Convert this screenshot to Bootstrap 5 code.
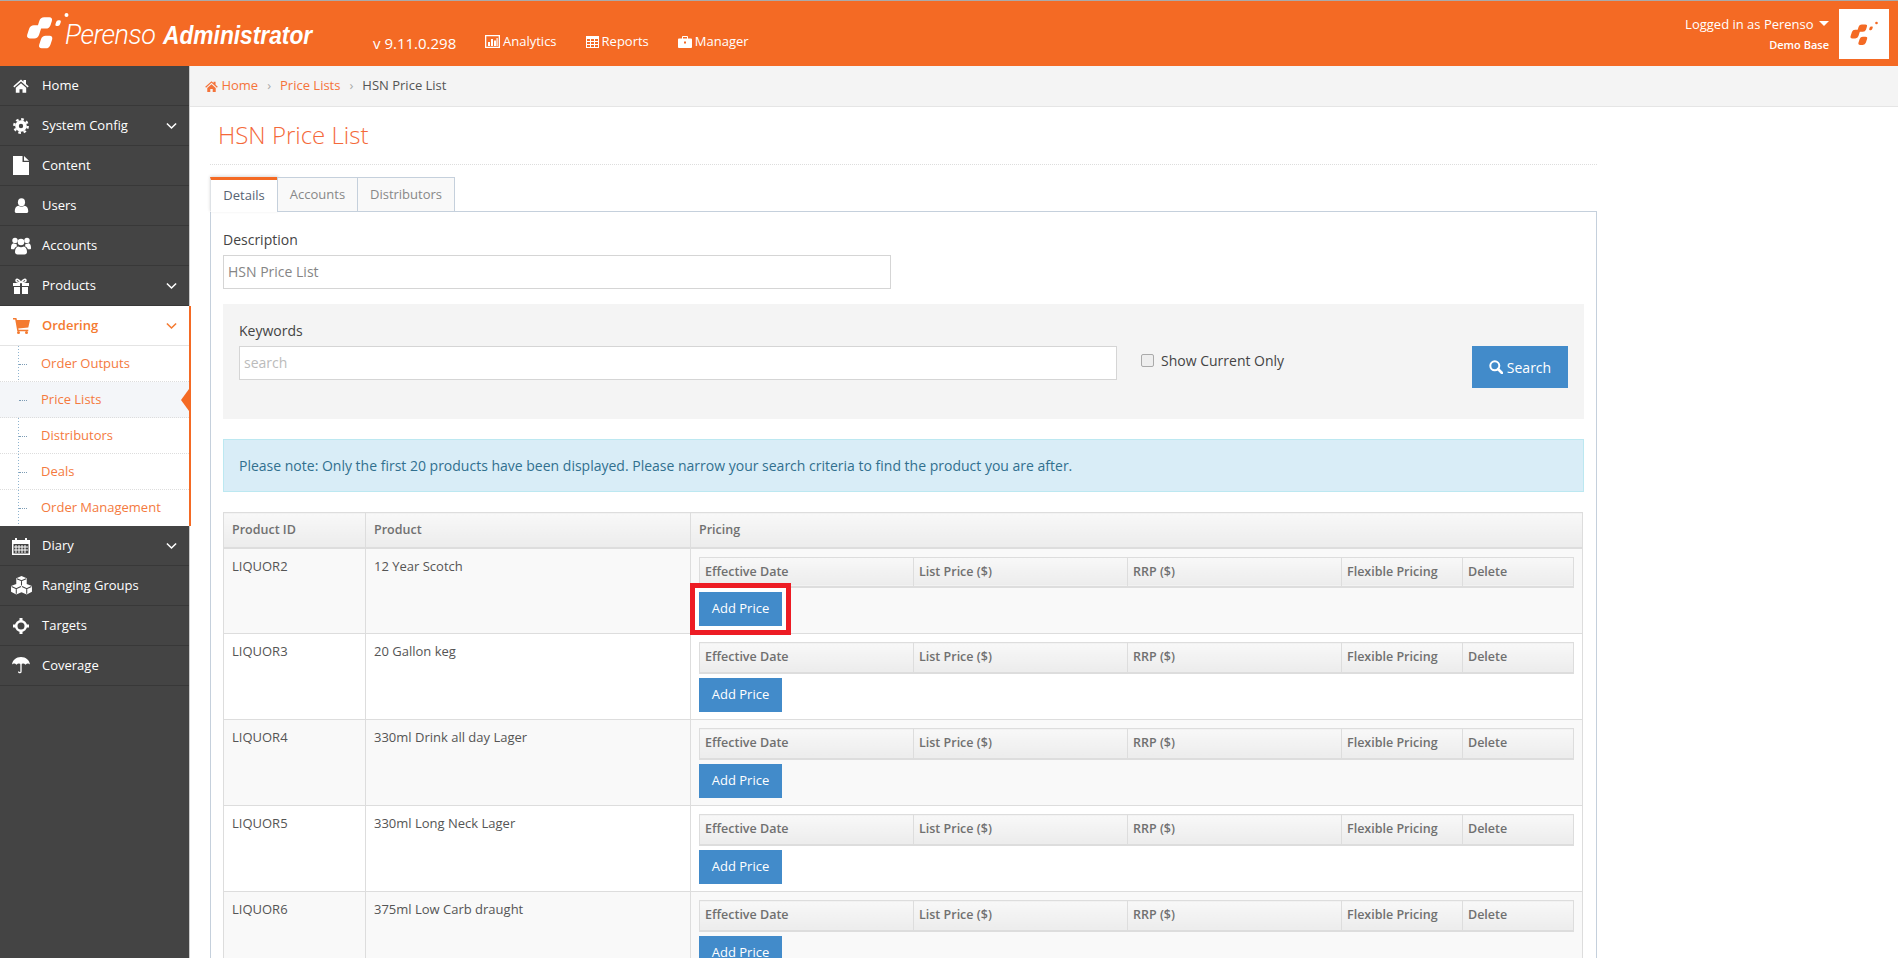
<!DOCTYPE html>
<html lang="en">
  <head>
    <meta charset="UTF-8" />
    <meta name="viewport" content="width=device-width, initial-scale=1.0" />
    <title>HSN Price List</title>
    <link href="https://cdn.jsdelivr.net/npm/bootstrap@5.3.0/dist/css/bootstrap.min.css" rel="stylesheet" />
    <style>
      html, body { height: 100%; overflow: hidden; }
      body { font-family: "Open Sans", "Liberation Sans", sans-serif; font-size: 13px; color: #555; background: #fff; }
      .ico { fill: currentColor; flex: none; }

      .top-bar { height: 66px; background: #f46a24; border-top: 1px solid #aaa; color: #fff; padding-right: 9px; }
      .logo-wrap { width: 360px; padding-left: 25px; }
      .logo-mark { margin-top: -5px; }
      .logo-thin { font-family: Roboto, sans-serif; font-weight: 300; font-style: italic; font-size: 27px; margin-left: -5px; letter-spacing: -.5px; padding-top: 4px; }
      .logo-bold { font-family: "Liberation Sans", sans-serif; font-weight: 700; font-style: italic; font-size: 25px; margin-left: 8px; padding-top: 4px; display: inline-block; transform: scaleX(.91); transform-origin: left center; }
      .version { font-size: 15px; width: 112px; margin-left: 13px; padding-top: 31px; }
      .top-link { font-size: 13px; color: #fff; text-decoration: none; padding-top: 31px; gap: 3px; }
      .top-link + .top-link { margin-left: 29px; }
      .who { text-align: right; margin-right: 10px; line-height: 1; }
      .who-name { font-size: 13px; }
      .who-caret { display: inline-block; border-left: 5px solid transparent; border-right: 5px solid transparent; border-top: 5px solid #fff; margin-left: 2px; vertical-align: 3px; }
      .who-base { font-size: 11px; margin-top: 8px; font-weight: 600; }
      .who-pic { width: 50px; height: 50px; background: #fff; color: #f46a24; }

      .side-bar { width: 190px; flex: none; background: #444; border-right: 1px solid #ccc; }
      .side-bar .nav-link { height: 40px; padding: 0 12px 0 0; color: #fff; font-size: 13px; border-bottom: 1px solid #383838; }
      .side-ico { width: 42px; flex: none; }
      .side-bar .side-open { background: #fff; color: #f47a30; font-weight: 600; border-bottom: 1px solid #e4e4e4; }
      .open-group { background: #fff; width: 191px; border-right: 2px solid #f46a24; }
      .sub-list { background-image: linear-gradient(#8fb4d0 50%, transparent 50%); background-size: 1px 3px; background-position: 18px 0; background-repeat: repeat-y; }
      .sub-link { display: flex; align-items: center; height: 36px; padding-left: 41px; color: #f47a40; text-decoration: none; font-size: 13px; border-bottom: 1px dotted #ddd; position: relative; }
      .sub-link:last-child { border-bottom: 0; }
      .sub-link::before { content: ""; position: absolute; left: 19px; top: 50%; width: 8px; border-top: 1px dotted #7c9cb5; }
      .sub-now { background: #f4f6f9; }
      .sub-now::after { content: ""; position: absolute; right: 0; top: 7px; border-top: 11px solid transparent; border-bottom: 11px solid transparent; border-right: 8px solid #f46a24; }

      .crumbs { height: 41px; background: #f4f4f4; border-bottom: 1px solid #e5e5e5; padding-left: 15px; --bs-breadcrumb-divider: "\203A"; }
      .crumbs .breadcrumb { --bs-breadcrumb-margin-bottom: 0; --bs-breadcrumb-item-padding-x: 9px; --bs-breadcrumb-divider-color: #aaa; font-size: 13px; }
      .crumbs a { color: #f4733a; text-decoration: none; }
      .crumbs .breadcrumb-item.active { color: #555; }
      .page-wrap { width: 1387px; margin-left: 20px; }
      .page-head { height: 58px; border-bottom: 1px dotted #ddd; padding: 13px 0 0 8px; margin-bottom: 12px; }
      .page-head h1 { font-size: 24px; font-weight: 300; color: #f4693a; margin: 0; line-height: 30px; }

      .tab-row { --bs-nav-tabs-border-color: #c5d0dc; --bs-nav-tabs-border-radius: 0; --bs-nav-tabs-border-width: 1px; border-bottom-color: #c5d0dc; height: 35px; }
      .tab-row .nav-link { height: 35px; padding: 0; width: 98px; line-height: 33px; text-align: center; color: #888; background: #f9f9f9; border-color: #c5d0dc; font-size: 13px; margin-left: -1px; }
      .tab-row .nav-item:first-child .nav-link { margin-left: 0; }
      .tab-row .tab-a { width: 81px; }
      .tab-row .nav-link.active { width: 68px; background: #fff; color: #576373; border-top: 3px solid #f46a24; border-bottom-color: #fff; line-height: 31px; box-shadow: 0 -1px 3px rgba(0,0,0,.15); }
      .tab-body { border: 1px solid #c5d0dc; border-top: 0; padding: 18px 12px 0; height: 800px; }

      .field-lbl { font-size: 14px; line-height: 19px; margin-bottom: 6px; color: #444; display: block; }
      .plain-input { border-radius: 0; border: 1px solid #d5d5d5; font-size: 14px; height: 34px; padding: 3px 4px 5px; color: #858585; }
      .plain-input::placeholder { color: #bbb; }
      .desc-input { width: 668px; height: 34px; }
      .filter-box { background: #f4f4f4; height: 115px; margin-top: 15px; padding: 17px 16px 0; }
      .kw-col { width: 878px; }
      .chk-col { margin-left: 24px; padding-top: 30px; font-size: 14px; color: #444; line-height: 19px; }
      .chk-col .form-check-input { width: 13px; height: 13px; margin: 0 7px 0 0; border-color: #aaa; border-radius: 2px; background-color: #eee; }
      .blue-btn { background: #428bca; border: 0; border-radius: 0; color: #fff; font-size: 13px; }
      .find-btn { width: 96px; height: 42px; margin-top: 25px; margin-left: auto; font-size: 14px; }
      .note-box { margin: 20px 0; padding: 0 0 0 15px; height: 53px; background: #d9edf7; border: 1px solid #bce8f1; border-radius: 0; color: #31708f; line-height: 51px; font-size: 14px; }

      .price-tbl { table-layout: fixed; width: 1360px; border-collapse: collapse; margin: 0; }
      .price-tbl > * > tr > th, .price-tbl > * > tr > td { border: 1px solid #ddd; padding: 8px 8px 7px; font-size: 13px; vertical-align: top; line-height: 18px; }
      .price-tbl > thead > tr > th { height: 35px; font-size: 12.5px; font-weight: 600; color: #707070; padding: 7px 8px; line-height: 19px; background: linear-gradient(#f8f8f8, #ececec); border-bottom-width: 2px; }
      .price-tbl > tbody > tr > td { height: 86px; color: #555; background: #fff; }
      .price-tbl > tbody > tr:nth-child(odd) > td { background: #f9f9f9; }
      .c-id { width: 142px; }
      .c-name { width: 325px; }
      .sub-tbl { table-layout: fixed; width: 875px; border-collapse: collapse; margin-bottom: 4px; }
      .sub-tbl th { height: 30px; font-size: 12.5px; font-weight: 600; color: #707070; padding: 0 5px; line-height: 28px; border: 1px solid #ddd; border-bottom-width: 2px; background: linear-gradient(#f8f8f8, #ececec); }
      .s-a { width: 214px; }
      .s-b { width: 121px; }
      .add-btn { display: block; width: 83px; height: 34px; padding: 0; font-size: 13px; }
      .marked { box-shadow: 0 0 0 4px #fff, 0 0 0 9px #ed1c24; position: relative; z-index: 2; }
    </style>
  </head>
  <body class="d-flex flex-column">
    <svg width="0" height="0" class="position-absolute">
      <symbol id="i-mark" viewBox="30 20 135 115">
        <g transform="skewX(-18)">
          <rect x="88" y="36" width="38" height="34" rx="11" />
          <rect x="65" y="60" width="36" height="40" rx="11" />
          <rect x="111" y="92" width="34" height="38" rx="11" />
          <rect x="140" y="45" width="14" height="17" rx="5" />
        </g>
        <circle cx="155" cy="29" r="6" />
      </symbol>
      <symbol id="i-home" viewBox="0 0 16 16"><path d="M8 1.500 10.500 3.700V2H13v3.900l2.700 2.400-1 1.100L8 3.500 1.300 9.400l-1-1.100zM2.800 9.800 8 5.200l5.200 4.600v5H9.500v-3.600h-3v3.600H2.800z" /></symbol>
      <symbol id="i-gear" viewBox="0 0 16 16"><circle cx="8" cy="8" r="4" fill="none" stroke="currentColor" stroke-width="3.600" /><circle cx="8" cy="8" r="6.700" fill="none" stroke="currentColor" stroke-width="2.400" stroke-dasharray="2.600 2.660" /></symbol>
      <symbol id="i-file" viewBox="0 0 16 19"><path d="M0 0h9.500v6H16v13H0zM11 0l5 4.700h-5z" /></symbol>
      <symbol id="i-user" viewBox="0 0 16 16"><ellipse cx="8" cy="4.500" rx="3.800" ry="4.200" /><path d="M.8 14c0-3.400 1.700-5.300 4-5.700 2 1.300 4.400 1.300 6.400 0 2.300.4 4 2.300 4 5.700 0 1.200-.8 2-2 2H2.800c-1.200 0-2-.8-2-2z" /></symbol>
      <symbol id="i-group" viewBox="0 0 20 18"><circle cx="4" cy="3.500" r="2.700" /><circle cx="16" cy="3.500" r="2.700" /><circle cx="10" cy="5" r="3.300" /><path d="M0 10.500c0-2.500 1-3.900 2.500-4.200 1 .8 2.200.8 3.200.5-.2 1-.1 1.800.5 2.500-1.600.5-2.600 1.500-3 3H1c-.6 0-1-.4-1-1zM20 10.500c0-2.500-1-3.900-2.500-4.200-1 .8-2.200.8-3.200.5.200 1 .1 1.800-.5 2.500 1.600.5 2.600 1.500 3 3H19c.6 0 1-.4 1-1zM4 15c0-3 1.500-5 3.200-5.400 1.800 1 3.800 1 5.600 0C14.500 10 16 12 16 15c0 1.500-1 2.500-2.500 2.500h-7C5 17.500 4 16.500 4 15z" /></symbol>
      <symbol id="i-gift" viewBox="0 0 16 16"><path d="M0 5h7v3H0zM9 5h7v3H9zM1 9h6v7H1zM9 9h6v7H9z" /><path d="M8 4.500C6 1 3 .5 3 2.500c0 1.600 2.500 2 5 2zm0 0c2-3.500 5-4 5-2 0 1.600-2.500 2-5 2z" fill="none" stroke="currentColor" stroke-width="1.500" /></symbol>
      <symbol id="i-cart" viewBox="0 0 17 16"><path d="M0 0h3.400l.5 2H17l-1.700 7.500-10 1 .3 1.300h9.700v1.500H4.300L2.200 1.500H0z" /><circle cx="5.500" cy="14.500" r="1.500" /><circle cx="13.500" cy="14.500" r="1.500" /></symbol>
      <symbol id="i-cal" viewBox="0 0 18 18"><path d="M0 3h3V1h2v2h8V1h2v2h3v15H0zM1.500 7v9.500h15V7z" fill-rule="evenodd" /><path d="M4 8v8M7 8v8M10 8v8M13 8v8M2 10h14M2 13h14" stroke="currentColor" stroke-width="1" /></symbol>
      <symbol id="i-cube" viewBox="0 0 22 18">
        <path d="M11 0l5 2v5.500l5 2V15l-5 2.500-5-2-5 2L1 15V9.500l5-2V2z" />
        <path d="M6.500 2.500 11 4.500l4.500-2M11 4.500V9M1.500 10 6 12l4.500-2M6 12v5M11.500 10 16 12l4.500-2M16 12v5" fill="none" stroke="#444" stroke-width="1" />
      </symbol>
      <symbol id="i-target" viewBox="0 0 16 16"><circle cx="8" cy="8" r="4.800" fill="none" stroke="currentColor" stroke-width="2.600" /><path d="M6.500 0h3v3.500h-3zM6.500 12.500h3V16h-3zM0 6.500h3.500v3H0zM12.500 6.500H16v3h-3.500z" /></symbol>
      <symbol id="i-umb" viewBox="0 0 18 17"><path d="M9 0c5 0 8.500 3.300 9 7.500-1.300-1.300-3-1.300-4.500.2C12.300 6.400 10.400 6 9 7.500 7.600 6 5.700 6.400 4.500 7.700 3 6.200 1.300 6.200 0 7.500.5 3.300 4 0 9 0z" /><path d="M9 7v7.500c0 1.600-2.400 1.600-2.400 0" fill="none" stroke="currentColor" stroke-width="1.300" /></symbol>
      <symbol id="i-chev" viewBox="0 0 12 8"><path d="M1 1.200 6 6.200l5-5" fill="none" stroke="currentColor" stroke-width="1.700" /></symbol>
      <symbol id="i-chart" viewBox="0 0 15 13"><path d="M0 0h15v13H0zM1.300 1.300v10.400h12.400V1.300z" fill-rule="evenodd" /><path d="M3 7h2v4H3zM6 4h2v7H6zM9 5.500h2V11H9zM11.500 3h1.200v8h-1.200z" /></symbol>
      <symbol id="i-grid" viewBox="0 0 13 12"><path d="M0 0h13v12H0zM1 3v2h3V3zm4 0v2h3V3zm4 0v2h3V3zM1 6v2h3V6zm4 0v2h3V6zm4 0v2h3V6zM1 9v2h3V9zm4 0v2h3V9zm4 0v2h3V9z" fill-rule="evenodd" /></symbol>
      <symbol id="i-case" viewBox="0 0 14 12"><path d="M0 3.500C0 3 .5 2.500 1 2.500h3V1c0-.5.500-1 1-1h4c.5 0 1 .5 1 1v1.500h3c.5 0 1 .5 1 1V11c0 .5-.5 1-1 1H1c-.5 0-1-.5-1-1zM5 1v1.500h4V1zM6 5.500v2h2v-2z" fill-rule="evenodd" /></symbol>
      <symbol id="i-find" viewBox="0 0 14 14"><circle cx="5.800" cy="5.800" r="4.500" fill="none" stroke="currentColor" stroke-width="2" /><path d="M9 9l4 4" stroke="currentColor" stroke-width="2.600" stroke-linecap="round" /></symbol>
    </svg>

    <header class="top-bar d-flex flex-shrink-0">
      <div class="logo-wrap d-flex align-items-center">
        <svg class="ico logo-mark" width="45" height="38"><use href="#i-mark" /></svg>
        <span class="logo-thin">Perenso</span><span class="logo-bold">Administrator</span>
      </div>
      <div class="version">v 9.11.0.298</div>
      <a href="#" class="top-link d-flex align-items-center align-self-start">
        <svg class="ico" width="15" height="13"><use href="#i-chart" /></svg>Analytics
      </a>
      <a href="#" class="top-link d-flex align-items-center align-self-start">
        <svg class="ico" width="13" height="12"><use href="#i-grid" /></svg>Reports
      </a>
      <a href="#" class="top-link d-flex align-items-center align-self-start">
        <svg class="ico" width="14" height="12"><use href="#i-case" /></svg>Manager
      </a>
      <div class="ms-auto d-flex align-items-center">
        <div class="who">
          <div class="who-name">Logged in as Perenso <span class="who-caret"></span></div>
          <div class="who-base">Demo Base</div>
        </div>
        <div class="who-pic d-flex align-items-center justify-content-center">
          <svg class="ico" width="30" height="25"><use href="#i-mark" /></svg>
        </div>
      </div>
    </header>

    <div class="d-flex flex-grow-1 overflow-hidden">
      <nav class="side-bar nav flex-column flex-nowrap">
        <a class="nav-link d-flex align-items-center" href="#"><span class="side-ico d-flex justify-content-center"><svg class="ico" width="16" height="16"><use href="#i-home" /></svg></span>Home</a>
        <a class="nav-link d-flex align-items-center" href="#"><span class="side-ico d-flex justify-content-center"><svg class="ico" width="16" height="16"><use href="#i-gear" /></svg></span>System Config<svg class="ico ms-auto" width="11" height="8"><use href="#i-chev" /></svg></a>
        <a class="nav-link d-flex align-items-center" href="#"><span class="side-ico d-flex justify-content-center"><svg class="ico" width="16" height="19"><use href="#i-file" /></svg></span>Content</a>
        <a class="nav-link d-flex align-items-center" href="#"><span class="side-ico d-flex justify-content-center"><svg class="ico" width="15" height="15"><use href="#i-user" /></svg></span>Users</a>
        <a class="nav-link d-flex align-items-center" href="#"><span class="side-ico d-flex justify-content-center"><svg class="ico" width="20" height="18"><use href="#i-group" /></svg></span>Accounts</a>
        <a class="nav-link d-flex align-items-center" href="#"><span class="side-ico d-flex justify-content-center"><svg class="ico" width="16" height="16"><use href="#i-gift" /></svg></span>Products<svg class="ico ms-auto" width="11" height="8"><use href="#i-chev" /></svg></a>
        <div class="open-group">
          <a class="nav-link side-open d-flex align-items-center" href="#"><span class="side-ico d-flex justify-content-center"><svg class="ico" width="17" height="16"><use href="#i-cart" /></svg></span>Ordering<svg class="ico ms-auto" width="11" height="8"><use href="#i-chev" /></svg></a>
          <div class="sub-list">
            <a class="sub-link" href="#">Order Outputs</a>
            <a class="sub-link sub-now" href="#">Price Lists</a>
            <a class="sub-link" href="#">Distributors</a>
            <a class="sub-link" href="#">Deals</a>
            <a class="sub-link" href="#">Order Management</a>
          </div>
        </div>
        <a class="nav-link d-flex align-items-center" href="#"><span class="side-ico d-flex justify-content-center"><svg class="ico" width="18" height="18"><use href="#i-cal" /></svg></span>Diary<svg class="ico ms-auto" width="11" height="8"><use href="#i-chev" /></svg></a>
        <a class="nav-link d-flex align-items-center" href="#"><span class="side-ico d-flex justify-content-center"><svg class="ico" width="23" height="19"><use href="#i-cube" /></svg></span>Ranging Groups</a>
        <a class="nav-link d-flex align-items-center" href="#"><span class="side-ico d-flex justify-content-center"><svg class="ico" width="16" height="16"><use href="#i-target" /></svg></span>Targets</a>
        <a class="nav-link d-flex align-items-center" href="#"><span class="side-ico d-flex justify-content-center"><svg class="ico" width="18" height="17"><use href="#i-umb" /></svg></span>Coverage</a>
      </nav>

      <main class="flex-grow-1 overflow-hidden">
        <div class="crumbs d-flex align-items-center">
          <ol class="breadcrumb">
            <li class="breadcrumb-item"><a href="#"><svg class="ico" width="13" height="13"><use href="#i-home" /></svg> Home</a></li>
            <li class="breadcrumb-item"><a href="#">Price Lists</a></li>
            <li class="breadcrumb-item active">HSN Price List</li>
          </ol>
        </div>
        <div class="page-wrap">
          <div class="page-head"><h1>HSN Price List</h1></div>
          <ul class="nav nav-tabs tab-row">
            <li class="nav-item"><a class="nav-link active" href="#">Details</a></li>
            <li class="nav-item"><a class="nav-link tab-a" href="#">Accounts</a></li>
            <li class="nav-item"><a class="nav-link" href="#">Distributors</a></li>
          </ul>
          <div class="tab-body">
            <label class="field-lbl">Description</label>
            <input class="form-control plain-input desc-input" value="HSN Price List" />
            <div class="filter-box d-flex">
              <div class="kw-col">
                <label class="field-lbl">Keywords</label>
                <input class="form-control plain-input" placeholder="search" />
              </div>
              <div class="chk-col d-flex align-items-center align-self-start">
                <input class="form-check-input" type="checkbox" />Show Current Only
              </div>
              <button class="btn blue-btn find-btn d-flex align-items-center justify-content-center gap-1 align-self-start">
                <svg class="ico" width="14" height="14"><use href="#i-find" /></svg>Search
              </button>
            </div>
            <div class="alert note-box">Please note: Only the first 20 products have been displayed. Please narrow your search criteria to find the product you are after.</div>
            <table class="table price-tbl">
              <colgroup><col class="c-id" /><col class="c-name" /><col /></colgroup>
              <thead><tr><th>Product ID</th><th>Product</th><th>Pricing</th></tr></thead>
              <tbody>
                <tr>
                  <td>LIQUOR2</td><td>12 Year Scotch</td>
                  <td>
                    <table class="sub-tbl"><thead><tr><th class="s-a">Effective Date</th><th class="s-a">List Price ($)</th><th class="s-a">RRP ($)</th><th class="s-b">Flexible Pricing</th><th>Delete</th></tr></thead></table>
                    <button class="btn blue-btn add-btn marked">Add Price</button>
                  </td>
                </tr>
                <tr>
                  <td>LIQUOR3</td><td>20 Gallon keg</td>
                  <td>
                    <table class="sub-tbl"><thead><tr><th class="s-a">Effective Date</th><th class="s-a">List Price ($)</th><th class="s-a">RRP ($)</th><th class="s-b">Flexible Pricing</th><th>Delete</th></tr></thead></table>
                    <button class="btn blue-btn add-btn">Add Price</button>
                  </td>
                </tr>
                <tr>
                  <td>LIQUOR4</td><td>330ml Drink all day Lager</td>
                  <td>
                    <table class="sub-tbl"><thead><tr><th class="s-a">Effective Date</th><th class="s-a">List Price ($)</th><th class="s-a">RRP ($)</th><th class="s-b">Flexible Pricing</th><th>Delete</th></tr></thead></table>
                    <button class="btn blue-btn add-btn">Add Price</button>
                  </td>
                </tr>
                <tr>
                  <td>LIQUOR5</td><td>330ml Long Neck Lager</td>
                  <td>
                    <table class="sub-tbl"><thead><tr><th class="s-a">Effective Date</th><th class="s-a">List Price ($)</th><th class="s-a">RRP ($)</th><th class="s-b">Flexible Pricing</th><th>Delete</th></tr></thead></table>
                    <button class="btn blue-btn add-btn">Add Price</button>
                  </td>
                </tr>
                <tr>
                  <td>LIQUOR6</td><td>375ml Low Carb draught</td>
                  <td>
                    <table class="sub-tbl"><thead><tr><th class="s-a">Effective Date</th><th class="s-a">List Price ($)</th><th class="s-a">RRP ($)</th><th class="s-b">Flexible Pricing</th><th>Delete</th></tr></thead></table>
                    <button class="btn blue-btn add-btn">Add Price</button>
                  </td>
                </tr>
              </tbody>
            </table>
          </div>
        </div>
      </main>
    </div>
    <script src="https://cdn.jsdelivr.net/npm/bootstrap@5.3.0/dist/js/bootstrap.bundle.min.js"></script>
  </body>
</html>
